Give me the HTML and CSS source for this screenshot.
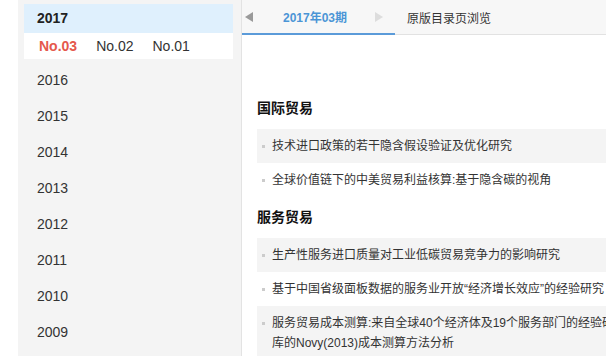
FILE: index.html
```html
<!DOCTYPE html>
<html lang="zh-CN">
<head>
<meta charset="utf-8">
<title>期刊目录</title>
<link rel="stylesheet" href="styles.css">
</head>
<body>
<div class="page">
  <aside class="sidebar">
    <div class="year-current">2017</div>
    <div class="issues">
      <span class="issue active">No.03</span>
      <span class="issue">No.02</span>
      <span class="issue">No.01</span>
    </div>
    <ul class="years">
      <li>2016</li>
      <li>2015</li>
      <li>2014</li>
      <li>2013</li>
      <li>2012</li>
      <li>2011</li>
      <li>2010</li>
      <li>2009</li>
    </ul>
  </aside>
  <main class="main">
    <nav class="tabs">
      <div class="tab active">
        <span class="arrow arrow-left"></span>
        <span class="tab-label">2017年03期</span>
        <span class="arrow arrow-right"></span>
      </div>
      <div class="tab plain">原版目录页浏览</div>
    </nav>
    <section class="content">
      <h3 class="section-title">国际贸易</h3>
      <ul class="articles">
        <li class="article shaded">技术进口政策的若干隐含假设验证及优化研究</li>
        <li class="article">全球价值链下的中美贸易利益核算:基于隐含碳的视角</li>
      </ul>
      <h3 class="section-title">服务贸易</h3>
      <ul class="articles">
        <li class="article shaded">生产性服务进口质量对工业低碳贸易竞争力的影响研究</li>
        <li class="article">基于中国省级面板数据的服务业开放“经济增长效应”的经验研究</li>
        <li class="article shaded">服务贸易成本测算:来自全球40个经济体及19个服务部门的经验研究——基于世界投入产出数据库的Novy(2013)成本测算方法分析</li>
      </ul>
    </section>
  </main>
</div>
</body>
</html>
```

FILE: styles.css
```css
html, body {
  margin: 0;
  padding: 0;
  background: #ffffff;
  overflow: hidden;
  width: 606px;
  height: 356px;
}

body {
  font-family: "Liberation Sans", "Noto Sans CJK SC", sans-serif;
  color: #333333;
}

ul {
  list-style: none;
  margin: 0;
  padding: 0;
}

.page {
  display: flex;
  align-items: stretch;
  padding-left: 18px;
  height: 356px;
  width: 900px;
}

/* Sidebar */
.sidebar {
  flex: 0 0 auto;
  width: 209px;
  padding: 4px 8px 0 6px;
  background: #f4f4f4;
  border-right: 1px solid #e3e3e3;
}

.year-current {
  height: 29px;
  line-height: 29px;
  padding-left: 13px;
  background: #dff0fd;
  font-size: 14px;
  font-weight: bold;
  color: #222222;
}

.issues {
  display: flex;
  gap: 19px;
  height: 26px;
  line-height: 26px;
  padding-left: 15px;
  background: #ffffff;
  font-size: 14px;
}

.issue {
  color: #333333;
}

.issue.active {
  color: #e5584c;
  font-weight: bold;
}

.years {
  padding-top: 3px;
}

.years li {
  height: 36px;
  line-height: 36px;
  padding-left: 13px;
  font-size: 14px;
  color: #333333;
}

/* Main */
.main {
  flex: 0 0 auto;
  width: 560px;
}

.tabs {
  display: flex;
  align-items: stretch;
  height: 34px;
  background: #f7f7f7;
  border-bottom: 1px solid #e2e2e2;
}

.tab {
  display: flex;
  align-items: center;
  font-size: 12px;
}

.tab.active {
  width: 150px;
  height: 33px;
  border-bottom: 2px solid #5b9bd9;
  margin-bottom: -1px;
  padding-left: 3px;
}

.tab-label {
  margin-left: 30px;
  color: #4b95d6;
  font-weight: bold;
}

.arrow {
  display: block;
  width: 0;
  height: 0;
  border-top: 5px solid transparent;
  border-bottom: 5px solid transparent;
}

.arrow-left {
  border-right: 8px solid #9a9a9a;
}

.arrow-right {
  margin-left: 28px;
  border-left: 8px solid #dddddd;
}

.tab.plain {
  padding-left: 12px;
  color: #333333;
}

.content {
  padding: 53px 0 0 15px;
}

.section-title {
  margin: 0;
  height: 41px;
  line-height: 41px;
  font-size: 14px;
  font-weight: bold;
  color: #111111;
}

.article {
  position: relative;
  width: 504px;
  padding: 7px 10px 7px 15px;
  line-height: 20px;
  font-size: 12px;
  color: #333333;
}

.article::before {
  content: "";
  position: absolute;
  left: 5px;
  top: 16px;
  width: 3px;
  height: 3px;
  background: #cccccc;
}

.article.shaded {
  background: #f4f4f4;
}
```
